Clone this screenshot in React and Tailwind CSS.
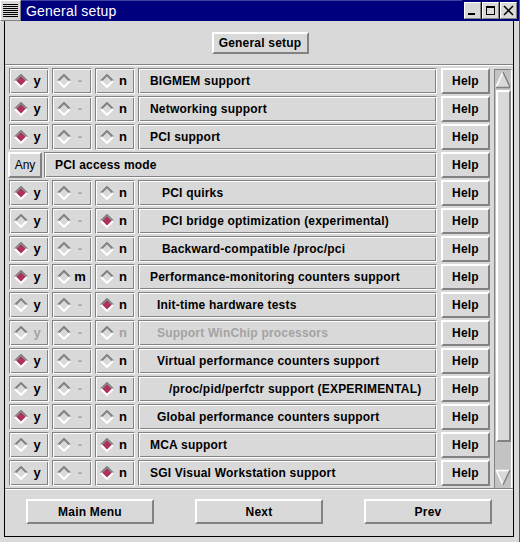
import React from "react";

const raised =
  "border-2 border-t-white border-l-white border-b-[#828282] border-r-[#828282] bg-[#d9d9d9]";
const groove =
  "border border-t-[#828282] border-l-[#828282] border-b-white border-r-white shadow-[inset_1px_1px_0_#ffffff,inset_-1px_-1px_0_#828282]";

const rows = [
  { sel: "y", text: "BIGMEM support", pad: "pl-[11px]" },
  { sel: "y", text: "Networking support", pad: "pl-[11px]" },
  { sel: "y", text: "PCI support", pad: "pl-[11px]" },
  { any: true, text: "PCI access mode" },
  { sel: "y", text: "PCI quirks", pad: "pl-[23px]" },
  { sel: "n", text: "PCI bridge optimization (experimental)", pad: "pl-[23px]" },
  { sel: "y", text: "Backward-compatible /proc/pci", pad: "pl-[23px]" },
  { sel: "y", m: true, text: "Performance-monitoring counters support", pad: "pl-[11px]" },
  { sel: "n", text: "Init-time hardware tests", pad: "pl-[18px]" },
  { sel: null, dim: true, text: "Support WinChip processors", pad: "pl-[18px]" },
  { sel: "y", text: "Virtual performance counters support", pad: "pl-[18px]" },
  { sel: "n", text: "/proc/pid/perfctr support (EXPERIMENTAL)", pad: "pl-[30px]" },
  { sel: "y", text: "Global performance counters support", pad: "pl-[18px]" },
  { sel: "n", text: "MCA support", pad: "pl-[11px]" },
  { sel: "n", text: "SGI Visual Workstation support", pad: "pl-[11px]" },
];

const Diamond = ({ on }) => (
  <svg width="14" height="14" viewBox="0 0 14 14" className="shrink-0">
    {on && <polygon points="7,2 12,7 7,12 2,7" fill="#b03060" />}
    <polyline points="1,7 7,1 13,7" fill="none" stroke="#828282" strokeWidth="2" />
    <polyline points="1,7 7,13 13,7" fill="none" stroke="#ffffff" strokeWidth="2" />
  </svg>
);

const Radio = ({ on, letter, dim }) => (
  <div className={`w-[40px] h-[26px] flex items-center pl-[4px] shrink-0 ${groove}`}>
    <Diamond on={on} />
    <span
      className={`w-[16px] ml-[1px] text-center text-[13px] font-bold ${
        dim ? "text-[#a3a3a3]" : "text-black"
      }`}
    >
      {letter}
    </span>
  </div>
);

const HelpBtn = () => (
  <div className={`w-[49px] h-[26px] ml-[4px] flex items-center justify-center text-[12px] font-bold tracking-[0.2px] shrink-0 ${raised}`}>
    Help
  </div>
);

const Row = ({ row }) => {
  if (row.any) {
    return (
      <div className="flex h-[26px] -ml-[1px]">
        <div className={`w-[34px] h-[26px] flex items-center justify-center text-[12px] shrink-0 ${raised}`}>
          Any
        </div>
        <div className={`flex-1 ml-[2px] flex items-center pl-[10px] text-[12px] font-bold tracking-[0.2px] ${groove}`}>
          {row.text}
        </div>
        <HelpBtn />
      </div>
    );
  }
  return (
    <div className="flex h-[26px] gap-[3px]">
      <Radio on={row.sel === "y"} letter="y" dim={row.dim} />
      <div className={`w-[40px] h-[26px] flex items-center pl-[4px] shrink-0 ${groove}`}>
        <Diamond on={false} />
        <span
          className={`w-[16px] ml-[1px] text-center text-[13px] font-bold ${
            row.m ? "text-black" : "text-[#a3a3a3]"
          }`}
        >
          {row.m ? "m" : "-"}
        </span>
      </div>
      <Radio on={row.sel === "n"} letter="n" dim={row.dim} />
      <div
        className={`flex-1 flex items-center text-[12px] font-bold tracking-[0.2px] ${row.pad} ${groove} ${
          row.dim ? "text-[#a3a3a3]" : "text-black"
        }`}
      >
        {row.text}
      </div>
      <div className="-ml-[3px] flex">
        <HelpBtn />
      </div>
    </div>
  );
};

const Scrollbar = () => (
  <div className="w-[18px] h-[420px] mt-[1px] bg-[#c3c3c3] border border-t-[#828282] border-l-[#828282] border-b-white border-r-white flex flex-col items-center">
    <svg width="16" height="18" viewBox="0 0 16 18" className="mt-[1px]">
      <polygon points="8,1 15,16 1,16" fill="#d9d9d9" />
      <line x1="8" y1="1" x2="1" y2="16" stroke="#ffffff" strokeWidth="1.5" />
      <line x1="8" y1="1" x2="15" y2="16" stroke="#828282" strokeWidth="1.5" />
      <line x1="1" y1="16.5" x2="15" y2="16.5" stroke="#828282" strokeWidth="1.5" />
    </svg>
    <div className={`w-[15px] h-[352px] mt-[1px] ${raised}`} />
    <div className="flex-1" />
    <svg width="16" height="18" viewBox="0 0 16 18" className="mb-[1px]">
      <polygon points="1,1 15,1 8,16" fill="#d9d9d9" />
      <line x1="1" y1="1.5" x2="15" y2="1.5" stroke="#ffffff" strokeWidth="1.5" />
      <line x1="1" y1="1" x2="8" y2="16" stroke="#ffffff" strokeWidth="1.5" />
      <line x1="15" y1="1" x2="8" y2="16" stroke="#828282" strokeWidth="1.5" />
    </svg>
  </div>
);

const TitleButton = ({ children }) => (
  <div className="w-[17px] h-[17px] bg-[#d9d9d9] border border-t-white border-l-white border-b-[#828282] border-r-[#828282] flex items-center justify-center">
    <svg width="13" height="13" viewBox="0 0 13 13">
      {children}
    </svg>
  </div>
);

export default function App() {
  return (
    <div className="w-[520px] h-[542px] bg-[#d9d9d9] flex flex-col font-['Liberation_Sans',Arial,sans-serif] text-black overflow-hidden border-r border-[#555]">
      <div className="h-[21px] flex shrink-0">
        <div className="w-[21px] h-[21px] bg-[#d9d9d9] border border-t-white border-l-white border-b-[#828282] border-r-[#828282] flex items-center justify-center">
          <svg width="15" height="15" viewBox="0 0 15 15">
            {[1, 3, 5, 7, 9, 11, 13].map((y) => (
              <line key={y} x1="0" y1={y + 0.5} x2="15" y2={y + 0.5} stroke="#000" strokeWidth="1" />
            ))}
          </svg>
        </div>
        <div className="flex-1 bg-[#00007f] flex items-center pl-[5px] text-white text-[14px] tracking-[0.2px] border-t border-[#4040a0]">
          General setup
        </div>
        <div className="bg-[#00007f] flex items-center gap-[1px] pr-[2px] pl-[2px]">
          <TitleButton>
            <rect x="2" y="9" width="7" height="2" fill="#000" />
          </TitleButton>
          <TitleButton>
            <rect x="2.5" y="2.5" width="8" height="8" fill="none" stroke="#000" strokeWidth="1" />
            <rect x="2" y="2" width="9" height="2" fill="#000" />
          </TitleButton>
          <TitleButton>
            <path d="M2 2 L11 11 M11 2 L2 11" stroke="#000" strokeWidth="1.5" />
          </TitleButton>
        </div>
      </div>

      <div className="flex-1 flex pl-[4px] pr-[5px] pb-[5px]">
        <div className="flex-1 flex flex-col border-l border-r border-b border-black">
          <div className="h-[43px] shrink-0 flex justify-center pt-[11px] pl-[2px]">
            <div className={`w-[97px] h-[22px] flex items-center justify-center text-[12px] font-bold tracking-[0.2px] ${raised}`}>
              General setup
            </div>
          </div>
          <div className="h-0 border-t border-b border-t-[#828282] border-b-white" />
          <div className="h-[422px] shrink-0 flex pl-[4px] pt-[2px]">
            <div className="w-[481px] flex flex-col gap-[2px]">
              {rows.map((row, i) => (
                <Row key={i} row={row} />
              ))}
            </div>
            <div className="ml-[4px]">
              <Scrollbar />
            </div>
          </div>
          <div className="h-0 border-t border-b border-t-[#828282] border-b-white" />
          <div className="flex-1 flex justify-between items-start px-[21px] pt-[9px]">
            {["Main Menu", "Next", "Prev"].map((t) => (
              <div
                key={t}
                className={`w-[128px] h-[25px] flex items-center justify-center text-[12px] font-bold tracking-[0.2px] ${raised}`}
              >
                {t}
              </div>
            ))}
          </div>
        </div>
      </div>
    </div>
  );
}
